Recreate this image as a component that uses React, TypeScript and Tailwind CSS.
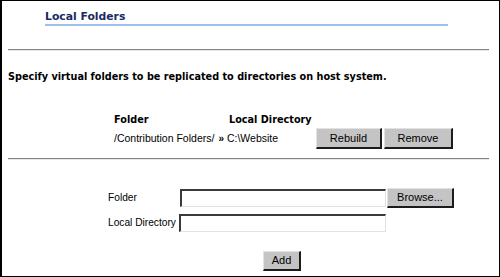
import React from 'react'

const verdana = { fontFamily: '"DejaVu Sans", Verdana, sans-serif' }

function Btn({ children, className = '' }: { children: React.ReactNode; className?: string }) {
  return (
    <button
      className={`h-[20px] bg-[#c4c4c4] border border-t-[#e2e2e2] border-l-[#e2e2e2] border-r-2 border-b-2 border-r-[#1c1c1c] border-b-[#1c1c1c] text-[11px] leading-none text-black font-['Liberation_Sans',Arial,sans-serif] ${className}`}
    >
      {children}
    </button>
  )
}

function Field({ className = '' }: { className?: string }) {
  return (
    <input
      type="text"
      className={`h-[18px] w-[206px] bg-white border border-t-2 border-l-2 border-t-[#3a3a3a] border-l-[#3a3a3a] border-r-[#e2e2e2] border-b-[#e2e2e2] outline-none ${className}`}
    />
  )
}

export default function App() {
  return (
    <div className="w-[500px] h-[277px] bg-white border border-l-2 border-black overflow-hidden font-['Liberation_Sans',Arial,sans-serif] text-black">
      <div className="pl-[43px] pt-[9px]">
        <div className="w-[403px] border-b-2 border-[#9cc0e8] pb-[1px]">
          <h1 className="text-[10.8px] font-bold text-[#1c2a66] leading-[13px]" style={verdana}>Local Folders</h1>
        </div>
      </div>

      <div className="ml-[6px] w-[481px] mt-[23px] h-[2px] border-t border-[#848484] bg-[#e6e6e6]" />

      <p className="ml-[6px] mt-[20px] text-[9.7px] font-bold leading-[12px]" style={verdana}>
        Specify virtual folders to be replicated to directories on host system.
      </p>

      <div className="mt-[31px] ml-[112px]">
        <div className="flex text-[9.7px] font-bold leading-[12px]" style={verdana}>
          <span className="w-[115px]">Folder</span>
          <span>Local Directory</span>
        </div>
        <div className="flex items-center mt-[2px] text-[10.5px]">
          <span className="w-[202px] flex items-center">
            /Contribution Folders/
            <span className="ml-[4px] font-bold text-[10px]">»</span>
            <span className="ml-[3px]">C:\Website</span>
          </span>
          <Btn className="w-[66px] h-[21px]">Rebuild</Btn>
          <Btn className="w-[69px] h-[21px] ml-[2px]">Remove</Btn>
        </div>
      </div>

      <div className="ml-[6px] w-[481px] mt-[9px] h-[2px] border-t border-[#848484] bg-[#e6e6e6]" />

      <div className="ml-[106px] mt-[28px] text-[10.2px]">
        <div className="flex items-center">
          <span className="w-[72px]">Folder</span>
          <Field />
          <Btn className="w-[67px] h-[19px] ml-[1px]">Browse...</Btn>
        </div>
        <div className="flex items-center mt-[6px]">
          <span className="w-[71px] whitespace-nowrap">Local Directory</span>
          <Field className="w-[207px]" />
        </div>
      </div>

      <div className="ml-[261px] mt-[15px]">
        <Btn className="w-[38px]">Add</Btn>
      </div>
    </div>
  )
}
